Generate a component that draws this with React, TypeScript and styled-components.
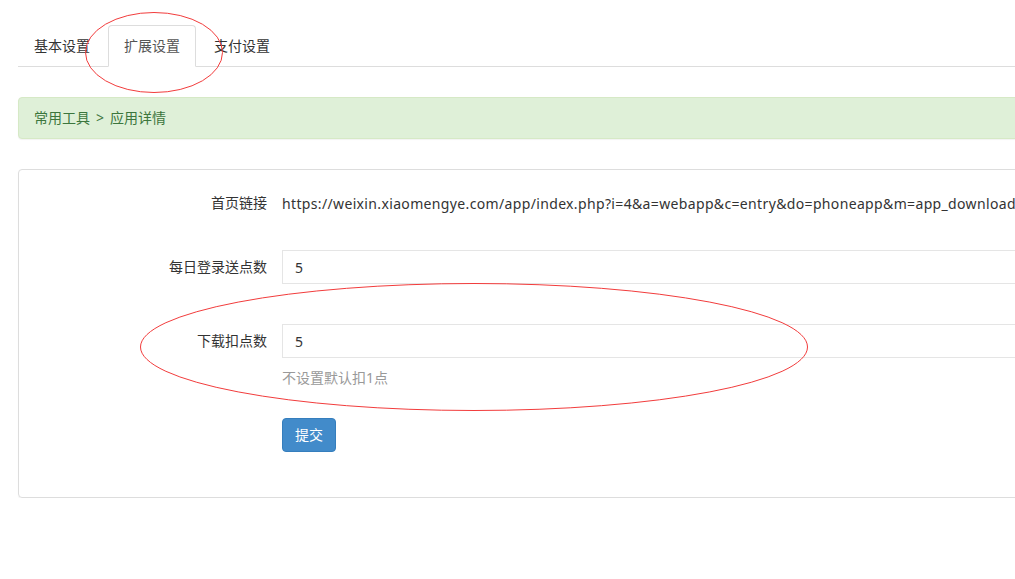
import React from 'react'
import styled, { createGlobalStyle } from 'styled-components'

const GlobalStyle = createGlobalStyle`
    html, body {
        margin: 0;
        padding: 0;
        background: #fff;
        overflow: hidden;
    }
    body {
        font-family: "Noto Sans", "Noto Sans CJK SC", sans-serif;
        font-size: 14px;
        line-height: 20px;
        color: #333;
    }
`

const Page = styled.div`
    position: relative;
    width: 1250px;
    padding: 25px 0 0 18px;
    box-sizing: content-box;
`

const TabBar = styled.ul`
    display: flex;
    margin: 0;
    padding: 0;
    list-style: none;
    border-bottom: 1px solid #ddd;
`

const Tab = styled.li<{ $active?: boolean }>`
    margin: 0 2px -1px 0;
    padding: 10px 15px;
    border: 1px solid ${p => (p.$active ? '#ddd' : 'transparent')};
    border-bottom-color: ${p => (p.$active ? '#fff' : 'transparent')};
    border-radius: 4px 4px 0 0;
    background: ${p => (p.$active ? '#fff' : 'transparent')};
    color: ${p => (p.$active ? '#555' : '#333')};
    cursor: pointer;
`

const Breadcrumb = styled.div`
    margin-top: 30px;
    padding: 10px 15px;
    background: #dff0d8;
    border: 1px solid #d6e9c6;
    border-radius: 4px;
    color: #3c763d;
    box-shadow: 0 1px 1px rgba(0, 0, 0, 0.05);
`

const Sep = styled.span`
    margin: 0 6px;
`

const Panel = styled.div`
    margin-top: 30px;
    padding: 16px 15px 16px;
    border: 1px solid #ddd;
    border-radius: 4px;
    box-shadow: 0 1px 1px rgba(0, 0, 0, 0.05);
`

const FormRow = styled.div<{ $gap?: number }>`
    display: grid;
    grid-template-columns: 233px 1fr;
    column-gap: 15px;
    margin-bottom: ${p => p.$gap ?? 30}px;
`

const Label = styled.label`
    padding-top: 7px;
    text-align: right;
    color: #333;
`

const Static = styled.div`
    padding-top: 8px;
    min-height: 34px;
    box-sizing: border-box;
    white-space: nowrap;
    letter-spacing: 0.35px;
`

const Input = styled.input`
    display: block;
    width: 100%;
    height: 34px;
    box-sizing: border-box;
    padding: 6px 12px;
    border: 1px solid #e5e5e5;
    border-radius: 0;
    font: inherit;
    color: #333;
    outline: none;
`

const Help = styled.div`
    margin-top: 10px;
    color: #999;
`

const Button = styled.button`
    padding: 6px 12px;
    border: 1px solid #357ebd;
    border-radius: 4px;
    background: #428bca;
    color: #fff;
    font: inherit;
    line-height: 20px;
    cursor: pointer;
`

const Mark = styled.svg`
    position: absolute;
    pointer-events: none;
    overflow: visible;
`

const App = () => {
    return (
        <>
            <GlobalStyle />
            <Page>
                <TabBar>
                    <Tab>基本设置</Tab>
                    <Tab $active>扩展设置</Tab>
                    <Tab>支付设置</Tab>
                </TabBar>
                <Breadcrumb>
                    常用工具<Sep>&gt;</Sep>应用详情
                </Breadcrumb>
                <Panel>
                    <FormRow>
                        <Label>首页链接</Label>
                        <Static>
                            https://weixin.xiaomengye.com/app/index.php?i=4&amp;a=webapp&amp;c=entry&amp;do=phoneapp&amp;m=app_download
                        </Static>
                    </FormRow>
                    <FormRow $gap={40}>
                        <Label>每日登录送点数</Label>
                        <Input defaultValue="5" />
                    </FormRow>
                    <FormRow>
                        <Label>下载扣点数</Label>
                        <div>
                            <Input defaultValue="5" />
                            <Help>不设置默认扣1点</Help>
                        </div>
                    </FormRow>
                    <FormRow $gap={29}>
                        <div />
                        <div>
                            <Button>提交</Button>
                        </div>
                    </FormRow>
                </Panel>
                <Mark style={{ left: 85, top: 12 }} width="138" height="81">
                    <ellipse cx="69" cy="40.5" rx="68.5" ry="40" fill="none" stroke="#f23c3c" strokeWidth="1" />
                </Mark>
                <Mark style={{ left: 140, top: 283 }} width="668" height="128">
                    <ellipse cx="334" cy="64" rx="333.5" ry="63.5" fill="none" stroke="#f23c3c" strokeWidth="1" />
                </Mark>
            </Page>
        </>
    )
}

export default App
